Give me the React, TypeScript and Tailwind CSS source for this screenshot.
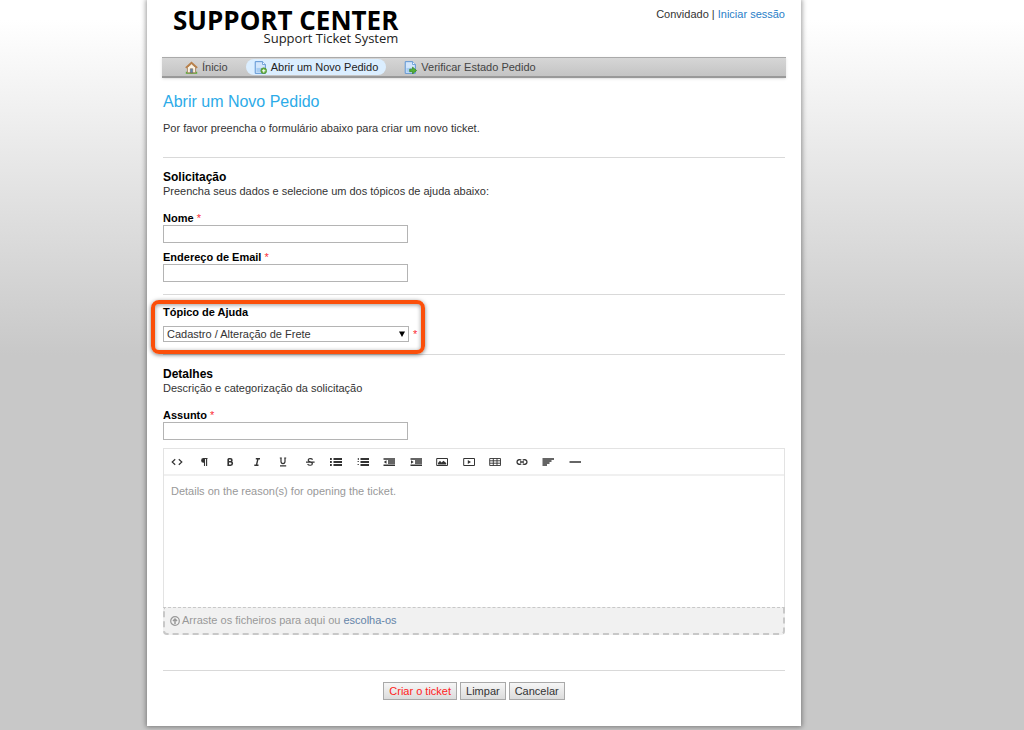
import React, { useState } from 'react';

const tools = [
  { label: 'HTML', icon: <path d="M4.2 3.2 1.2 6l3 2.8M7.8 3.2l3 2.8-3 2.8" strokeWidth="1.2" /> },
  { label: 'Format', icon: <><path d="M6 2H5.500a2.400 2.400 0 0 0 0 4.800H6z" fill="currentColor" stroke="none" /><path d="M5.500 2.500H9.500M6.500 2v8M8.600 2v8" strokeWidth="1.1" /></> },
  { label: 'Bold', icon: <path d="M4.2 2.8v6.4h2.4a1.7 1.7 0 0 0 0-3.4H4.2M4.2 2.8h2.2a1.5 1.5 0 0 1 0 3" strokeWidth="1.6" /> },
  { label: 'Italic', icon: <path d="M4.8 2.7h4.2M3.3 9.3h4.2M7 2.7 5.4 9.3" strokeWidth="1.4" /> },
  { label: 'Underline', icon: <path d="M4 2v3.6c0 2.6 4 2.6 4 0V2M2.800 2h2M7.200 2h2M3 9.800h6.2" strokeWidth="1.2" /> },
  { label: 'Strikethrough', icon: <path d="M8.6 3.6C7.5 2 4 2.4 4.2 4.2c.2 1.8 4.3 1.5 4.2 3.5-.1 2-3.800 2-4.800.3M2 6.2h8.600" strokeWidth="1.2" /> },
  { label: 'Unordered list', icon: <path d="M0 3h1.8M0 6h1.8M0 9h1.8M3.5 3H12M3.5 6H12M3.5 9H12" strokeWidth="1.8" /> },
  { label: 'Ordered list', icon: <><path d="M3.5 3H12M3.5 6H12M3.5 9H12" strokeWidth="1.8" /><path d="M1.3 2v2M.6 5.5h1.2M.6 8.5h1.2" strokeWidth="1" /></> },
  { label: 'Outdent', icon: <><path d="M.5 3H12M5 5H12M5 7H12M.5 9.2H12" strokeWidth="1.4" /><path d="M3.5 4.2v3.6L.8 6z" fill="currentColor" stroke="none" /></> },
  { label: 'Indent', icon: <><path d="M.5 3H12M5 5H12M5 7H12M.5 9.2H12" strokeWidth="1.4" /><path d="M1 4.2v3.6L3.7 6z" fill="currentColor" stroke="none" /></> },
  { label: 'Image', icon: <><path d="M.7 2.5h10.8v7H.7z" strokeWidth="1" /><path d="M2 8.5V7l2-2.2 1.5 1.6 2-1.6L10.2 7v1.5z" fill="currentColor" stroke="none" /></> },
  { label: 'Video', icon: <><path d="M.7 2.5h10.8v7H.7z" strokeWidth="1" /><path d="M4.8 4v4l3.2-2z" fill="currentColor" stroke="none" /></> },
  { label: 'Table', icon: <path d="M.7 2.5h10.8v7H.7zM.7 4.8h10.8M.7 7.2h10.8M4.3 2.5v7M8 2.5v7" strokeWidth="0.9" /> },
  { label: 'Link', icon: <path d="M5.2 4.2C4.5 3.4 1 3.2 1 6s3.5 2.6 4.2 1.8M6.8 4.2C7.5 3.4 11 3.2 11 6S7.5 8.6 6.8 7.8M4 6h4" strokeWidth="1.3" /> },
  { label: 'Align', icon: <path d="M.5 3H12M.5 5h9M.5 7h7M.5 9h4.5" strokeWidth="1.4" /> },
  { label: 'Horizontal rule', icon: <path d="M.5 6H12" strokeWidth="1.5" /> },
];

const HomeIcon = () => (
  <svg viewBox="0 0 16 16" className="size-[13px]">
    <path d="M1 14.5h14" stroke="#5fae3b" strokeWidth="2.5" />
    <path d="M3 8v6.5h10V8L8 3.5z" fill="#fbf3e4" stroke="#a07c56" />
    <path d="M6.5 9.5h3v5h-3z" fill="#5d88b8" stroke="#7b5b3b" strokeWidth="0.6" />
    <path d="M1 8.5 8 2l7 6.5" fill="none" stroke="#b9804a" strokeWidth="2.2" />
  </svg>
);

const PageIcon = ({ arrow }: { arrow?: boolean }) => (
  <svg viewBox="0 0 16 16" className="size-[13px]">
    <path d="M1.5.8h9L14 4.3v10.9H1.5z" fill="#d3e6fb" stroke="#5b93d3" strokeWidth="1.2" />
    <path d="M10.5.8v3.5H14" fill="#fff" stroke="#5b93d3" />
    <path d="M3 8.5h8v5H3z" fill="#a8cdf2" />
    {arrow ? (
      <path d="M7 10h3.5V7.5l5 4.2-5 4.2v-2.7H7z" fill="#54b236" stroke="#2e7d1c" strokeWidth="0.8" />
    ) : (
      <>
        <circle cx="12" cy="12" r="3.6" fill="#68b142" stroke="#3f8425" strokeWidth="0.7" />
        <path d="M12 10v4M10 12h4" stroke="#fff" strokeWidth="1.3" />
      </>
    )}
  </svg>
);

const Req = () => <span className="font-normal text-red-500">*</span>;

interface FieldProps {
  id: string;
  label: string;
}

const Field: React.FC<FieldProps> = ({ id, label }) => (
  <div className="flex flex-col">
    <label htmlFor={id} className="font-bold leading-[14px] text-black">
      {label} <Req />
    </label>
    <input id={id} type="text" className="h-[18px] w-[245px] border border-[#b4b4b4] bg-white px-1 outline-none" />
  </div>
);

interface SectionTitleProps {
  title: string;
  hint: string;
}

const SectionTitle: React.FC<SectionTitleProps> = ({ title, hint }) => (
  <div className="leading-[14px]">
    <h2 className="text-xs font-bold leading-[14px] text-black">{title}</h2>
    <p>{hint}</p>
  </div>
);

const buttonClass = 'h-[18px] border border-[#a9a9a9] bg-linear-to-b from-[#f6f6f6] to-[#dcdcdc] px-[5px] leading-4';

export default function App() {
  const [topic, setTopic] = useState('frete');

  return (
    <div className="min-h-screen bg-[#c8c8c8] bg-linear-to-b from-white from-[20px] to-[#c8c8c8] to-[355px] pb-1 pl-[147px] font-['Liberation_Sans',Arial,sans-serif] text-[11px] text-[#333]">
      <div className="flex min-h-[726px] w-full max-w-[654px] flex-col bg-white px-4 shadow-[0_0_5px_1px_rgba(0,0,0,0.4)]">
        <header className="flex h-[57px] items-start justify-between pt-2">
          <a href="#" className="ml-[10px] flex flex-col items-end font-['Open_Sans',sans-serif] text-black">
            <span className="text-[26px] font-bold leading-6">SUPPORT CENTER</span>
            <span className="text-[13px] leading-3 text-[#222]">Support Ticket System</span>
          </a>
          <p className="leading-3">
            Convidado | <a href="#" className="text-[#2a80c8]">Iniciar sessão</a>
          </p>
        </header>

        <nav className="-mx-px flex h-[21px] items-center border-t border-b-2 border-t-[#aaa] border-b-[#999] bg-linear-to-b from-[#d6d6d6] to-[#c4c4c4] pl-[15px] shadow-sm">
          <a href="#" className="flex items-center gap-1 px-2 text-[#444]"><HomeIcon />Ínicio</a>
          <a href="#" className="ml-[10px] flex h-4 items-center gap-1 rounded-full bg-[#dbeeff] px-2 text-[#222]"><PageIcon />Abrir um Novo Pedido</a>
          <a href="#" className="ml-[10px] flex items-center gap-1 px-2 text-[#444]"><PageIcon arrow />Verificar Estado Pedido</a>
        </nav>

        <main>
          <h1 className="mt-[13px] text-base leading-[22px] text-[#2cabe8]">Abrir um Novo Pedido</h1>
          <p className="mt-2 leading-[14px]">Por favor preencha o formulário abaixo para criar um novo ticket.</p>

          <form onSubmit={(e) => e.preventDefault()}>
            <hr className="mt-[22px] mb-3 border-[#d9d9d9]" />
            <SectionTitle title="Solicitação" hint="Preencha seus dados e selecione um dos tópicos de ajuda abaixo:" />
            <div className="mt-[13px] flex flex-col gap-[7px]">
              <Field id="name" label="Nome" />
              <Field id="email" label="Endereço de Email" />
            </div>

            <hr className="mt-3 border-[#d9d9d9]" />
            <div className="relative -ml-3 mt-[5px] w-[274px] rounded-lg border-4 border-[#fb4f0a] pr-1 pb-2 pl-2 shadow-[0_1px_4px_rgba(0,0,0,0.5),inset_0_1px_4px_rgba(0,0,0,0.4)]">
              <label htmlFor="topic" className="block font-bold leading-4 text-black">Tópico de Ajuda</label>
              <div className="relative mt-[6px] flex h-4 items-center gap-1">
                <select
                  id="topic"
                  value={topic}
                  onChange={(e) => setTopic(e.target.value)}
                  className="h-4 w-[246px] shrink-0 appearance-none border border-[#b4b4b4] bg-white px-[3px] leading-[14px] outline-none"
                >
                  <option value="frete">Cadastro / Alteração de Frete</option>
                </select>
                <svg viewBox="0 0 6 6" className="pointer-events-none absolute left-[236px] size-[6px]"><path d="M0 .5h6L3 6z" /></svg>
                <Req />
              </div>
            </div>
            <hr className="border-[#d9d9d9]" />

            <div className="mt-3">
              <SectionTitle title="Detalhes" hint="Descrição e categorização da solicitação" />
            </div>
            <div className="mt-[13px]">
              <Field id="subject" label="Assunto" />
            </div>

            <div className="mt-2 border border-b-0 border-[#e3e3e3]">
              <div className="border-b-2 border-[#f0f0f0]">
                <div className="flex h-[25px] max-w-[424px] items-center">
                  {tools.map((tool) => (
                    <button key={tool.label} type="button" aria-label={tool.label} className="flex flex-1 justify-center text-[#333]">
                      <svg viewBox="0 0 12 12" className="size-3" fill="none" stroke="currentColor">{tool.icon}</svg>
                    </button>
                  ))}
                </div>
              </div>
              <textarea
                aria-label="Details"
                placeholder="Details on the reason(s) for opening the ticket."
                className="block h-[131px] w-full resize-none px-[7px] pt-[7px] leading-4 outline-none placeholder:text-[#999]"
              />
            </div>
            <div className="flex h-7 items-center gap-[2px] rounded-b-sm border-2 border-t border-dashed border-[#c8c8c8] bg-[#f1f1f1] pl-[5px] text-[#999]">
              <svg viewBox="0 0 10 10" className="size-[10px]" fill="none" stroke="currentColor" strokeWidth="1.2">
                <circle cx="5" cy="5" r="4.3" />
                <path d="M5 8V3M3 5l2-2 2 2" strokeWidth="1.5" />
              </svg>
              <span>Arraste os ficheiros para aqui ou <a href="#" className="text-[#6484a8]">escolha-os</a></span>
            </div>

            <hr className="mt-[35px] border-[#d9d9d9]" />
            <div className="mt-[11px] flex justify-center gap-[3px]">
              <button type="submit" className={`${buttonClass} text-[#f22]`}>Criar o ticket</button>
              <button type="reset" className={buttonClass}>Limpar</button>
              <button type="button" className={buttonClass}>Cancelar</button>
            </div>
          </form>
        </main>
      </div>
    </div>
  );
}
